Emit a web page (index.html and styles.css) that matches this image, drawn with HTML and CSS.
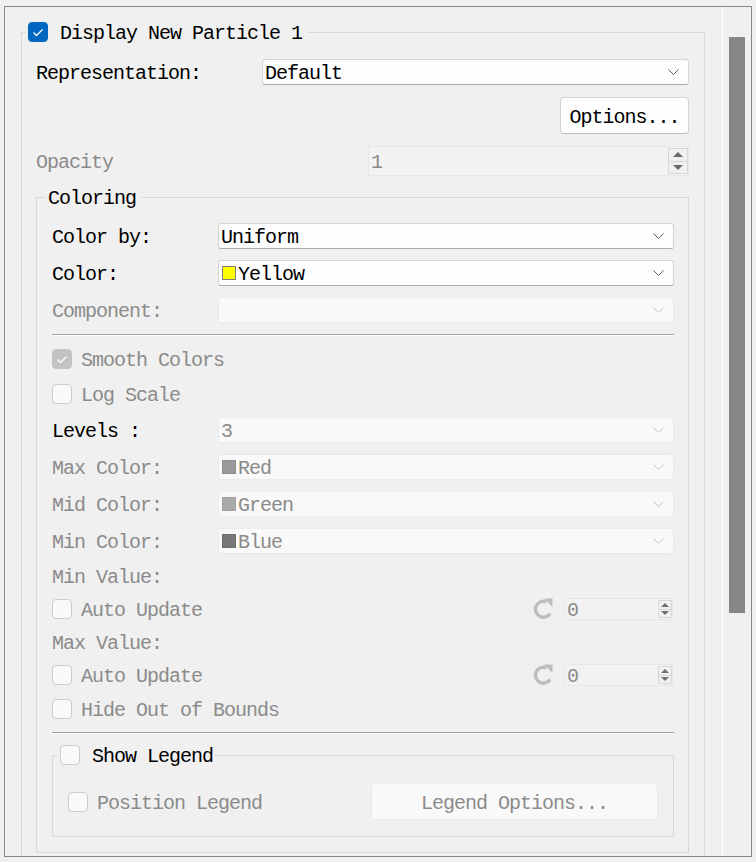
FILE: index.html
```html
<!DOCTYPE html>
<html>
<head>
<meta charset="utf-8">
<link rel="stylesheet" href="styles.css">
</head>
<body>
<div class="frame">
  <div class="viewport">
    <fieldset class="group outer">
      <legend class="legend-check">
        <span class="cb checked"><svg width="20" height="20" viewBox="0 0 20 20"><polyline points="5.5,10.5 8.5,13.5 14.5,7.5" fill="none" stroke="#fff" stroke-width="1.3"/></svg></span>
        <span class="t">Display New Particle 1</span>
      </legend>
      <div class="outer-body">
        <div class="row row-rep">
          <span class="t lbl lbl-rep">Representation:</span>
          <div class="combo"><span class="t val">Default</span><svg class="chev" width="11" height="6" viewBox="0 0 11 6"><polyline points="0.5,0.5 5.5,5.5 10.5,0.5" fill="none" stroke="#5a5a5a" stroke-width="1"/></svg></div>
        </div>
        <div class="row row-opt">
          <button class="btn btn-options"><span class="t">Options...</span></button>
        </div>
        <div class="row row-opa">
          <span class="t lbl dis">Opacity</span>
          <div class="spin spin-big">
            <span class="t val dis">1</span>
            <div class="arrows"><div class="up"></div><div class="down"></div></div>
          </div>
        </div>
        <fieldset class="group coloring">
          <legend class="legend-text"><span class="t">Coloring</span></legend>
          <div class="coloring-body">
            <div class="row row-combo">
              <span class="t lbl lbl-col">Color by:</span>
              <div class="combo"><span class="t val">Uniform</span><svg class="chev" width="11" height="6" viewBox="0 0 11 6"><polyline points="0.5,0.5 5.5,5.5 10.5,0.5" fill="none" stroke="#5a5a5a" stroke-width="1"/></svg></div>
            </div>
            <div class="row row-combo">
              <span class="t lbl lbl-col">Color:</span>
              <div class="combo"><span class="swatch sw-yellow"></span><span class="t val">Yellow</span><svg class="chev" width="11" height="6" viewBox="0 0 11 6"><polyline points="0.5,0.5 5.5,5.5 10.5,0.5" fill="none" stroke="#5a5a5a" stroke-width="1"/></svg></div>
            </div>
            <div class="row row-combo">
              <span class="t lbl lbl-col dis">Component:</span>
              <div class="combo combo-dis"><span class="val"></span><svg class="chev" width="11" height="6" viewBox="0 0 11 6"><polyline points="0.5,0.5 5.5,5.5 10.5,0.5" fill="none" stroke="#c4c4c4" stroke-width="1"/></svg></div>
            </div>
            <div class="sep"></div>
            <div class="row row-check">
              <span class="cb checked-dis"><svg width="20" height="20" viewBox="0 0 20 20"><polyline points="5.5,10.5 8.5,13.5 14.5,7.5" fill="none" stroke="#fff" stroke-width="1.3"/></svg></span>
              <span class="t dis">Smooth Colors</span>
            </div>
            <div class="row row-check">
              <span class="cb"></span>
              <span class="t dis">Log Scale</span>
            </div>
            <div class="row row-combo">
              <span class="t lbl lbl-col">Levels :</span>
              <div class="combo combo-dis"><span class="t val dis">3</span><svg class="chev" width="11" height="6" viewBox="0 0 11 6"><polyline points="0.5,0.5 5.5,5.5 10.5,0.5" fill="none" stroke="#c4c4c4" stroke-width="1"/></svg></div>
            </div>
            <div class="row row-combo">
              <span class="t lbl lbl-col dis">Max Color:</span>
              <div class="combo combo-dis"><span class="swatch sw-red"></span><span class="t val dis">Red</span><svg class="chev" width="11" height="6" viewBox="0 0 11 6"><polyline points="0.5,0.5 5.5,5.5 10.5,0.5" fill="none" stroke="#c4c4c4" stroke-width="1"/></svg></div>
            </div>
            <div class="row row-combo">
              <span class="t lbl lbl-col dis">Mid Color:</span>
              <div class="combo combo-dis"><span class="swatch sw-green"></span><span class="t val dis">Green</span><svg class="chev" width="11" height="6" viewBox="0 0 11 6"><polyline points="0.5,0.5 5.5,5.5 10.5,0.5" fill="none" stroke="#c4c4c4" stroke-width="1"/></svg></div>
            </div>
            <div class="row row-combo">
              <span class="t lbl lbl-col dis">Min Color:</span>
              <div class="combo combo-dis"><span class="swatch sw-blue"></span><span class="t val dis">Blue</span><svg class="chev" width="11" height="6" viewBox="0 0 11 6"><polyline points="0.5,0.5 5.5,5.5 10.5,0.5" fill="none" stroke="#c4c4c4" stroke-width="1"/></svg></div>
            </div>
            <div class="row row-line"><span class="t dis">Min Value:</span></div>
            <div class="row row-line">
              <span class="cb"></span>
              <span class="t dis cb-text">Auto Update</span>
              <svg class="reload" width="22" height="22" viewBox="0 0 22 22"><path d="M18.2 15.5 A8 8 0 1 1 14.5 3.8" fill="none" stroke="#bdbdbd" stroke-width="3.4"/><polygon points="12,0.5 20.5,0.5 20.5,9" fill="#bdbdbd"/></svg>
              <div class="spin spin-small">
                <span class="t val dis">0</span>
                <div class="arrows"><div class="up"></div><div class="down"></div></div>
              </div>
            </div>
            <div class="row row-line"><span class="t dis">Max Value:</span></div>
            <div class="row row-line">
              <span class="cb"></span>
              <span class="t dis cb-text">Auto Update</span>
              <svg class="reload" width="22" height="22" viewBox="0 0 22 22"><path d="M18.2 15.5 A8 8 0 1 1 14.5 3.8" fill="none" stroke="#bdbdbd" stroke-width="3.4"/><polygon points="12,0.5 20.5,0.5 20.5,9" fill="#bdbdbd"/></svg>
              <div class="spin spin-small">
                <span class="t val dis">0</span>
                <div class="arrows"><div class="up"></div><div class="down"></div></div>
              </div>
            </div>
            <div class="row row-hide">
              <span class="cb"></span>
              <span class="t dis">Hide Out of Bounds</span>
            </div>
            <div class="sep"></div>
            <fieldset class="group legend-box">
              <legend class="legend-check legend-check-small">
                <span class="cb"></span>
                <span class="t">Show Legend</span>
              </legend>
              <div class="legend-body">
                <span class="cb"></span>
                <span class="t dis">Position Legend</span>
                <button class="btn btn-legend"><span class="t">Legend Options...</span></button>
              </div>
            </fieldset>
          </div>
        </fieldset>
      </div>
    </fieldset>
  </div>
  <div class="scrollbar"><div class="thumb"></div></div>
</div>
</body>
</html>
```
FILE: styles.css
```css
* { box-sizing: border-box; }

body {
  margin: 0;
  background: #f0f0f0;
  font-family: "Liberation Mono", "DejaVu Sans Mono", monospace;
  font-size: 20px;
  letter-spacing: -1px;
  line-height: 20px;
  color: #000;
}

.t {
  display: block;
  padding-top: 4px;
  white-space: nowrap;
}

.frame {
  margin: 6px 4px 0;
  height: 851px;
  border: 1px solid #878787;
  display: flex;
  overflow: hidden;
}

.viewport {
  flex: 1;
  min-width: 0;
  overflow: hidden;
  padding: 15px 17px 0 16px;
}

.scrollbar {
  flex: none;
  width: 29px;
  border-left: 1px solid #ffffff;
  padding: 30px 0 0 6px;
}

.thumb {
  width: 16px;
  height: 576px;
  background: #868686;
}

fieldset.group {
  margin: 0;
  padding: 0;
  min-width: 0;
  border: 1px solid #d9d9d9;
}

.dis { color: #8b8b8b; }

/* legends */
.legend-check {
  margin-left: 4px;
  padding: 0 6px 0 2px;
  height: 20px;
  display: flex;
  align-items: center;
  gap: 12px;
}

.legend-check-small {
  margin-left: 5px;
  padding: 0 2px 0 2px;
}

.legend-text {
  margin-left: 9px;
  padding: 0 6px 0 2px;
  height: 22px;
  display: flex;
  align-items: center;
}

/* checkbox */
.cb {
  flex: none;
  width: 20px;
  height: 20px;
  border: 1px solid #cdcdcd;
  border-radius: 4px;
  background: #f9f9f9;
  display: block;
  position: relative;
}

.cb svg {
  position: absolute;
  left: -1px;
  top: -1px;
}

.cb.checked {
  background: #0067c0;
  border-color: #0067c0;
}

.cb.checked-dis {
  background: #c3c3c3;
  border-color: #c3c3c3;
}

/* rows */
.row {
  display: flex;
  align-items: center;
}

.outer-body {
  display: flex;
  flex-direction: column;
  padding: 17px 15px 20px 14px;
}

.row-rep { height: 26px; margin-bottom: 12px; }
.row-opt { height: 37px; margin-bottom: 12px; justify-content: flex-end; }
.row-opa { height: 30px; margin-bottom: 10px; }

.lbl { flex: none; }
.lbl-rep { width: 226px; }
.lbl-col { width: 166px; }

/* combo */
.combo {
  flex: 1;
  height: 26px;
  display: flex;
  align-items: center;
  padding: 0 9px 0 2px;
  background: #fdfdfd;
  border: 1px solid #d4d4d4;
  border-bottom-color: #acacac;
  border-radius: 3px;
  white-space: nowrap;
}

.combo .val { flex: 1; }
.combo .chev { flex: none; }

.combo-dis {
  background: #f9f9f9;
  border-color: #ebebeb;
}

.swatch {
  flex: none;
  width: 14px;
  height: 14px;
  margin: 0 2px 0 1px;
  border: 1px solid #7d7d7d;
}

.sw-yellow { background: #ffff00; border-color: #808080; }
.sw-red { background: #999999; border-color: #8f8f8f; }
.sw-green { background: #aaaaaa; border-color: #a2a2a2; }
.sw-blue { background: #777777; border-color: #707070; }

/* buttons */
.btn {
  font: inherit;
  letter-spacing: inherit;
  line-height: 20px;
  color: #000;
  height: 37px;
  padding: 0;
  background: #fdfdfd;
  border: 1px solid #d3d3d3;
  border-bottom-color: #bdbdbd;
  border-radius: 4px;
  display: flex;
  align-items: center;
  justify-content: center;
}

.btn-options {
  width: 129px;
}

.btn-legend {
  width: 287px;
  margin-left: auto;
  color: #8b8b8b;
  background: #f9f9f9;
  border-color: #ebebeb;
}

/* spin boxes */
.spin {
  display: flex;
  align-items: center;
  background: #f2f2f2;
  border: 1px solid #e7e7e7;
  padding-left: 2px;
}

.spin .val { flex: 1; }

.spin-big {
  width: 321px;
  height: 30px;
  margin-left: auto;
}

.spin-small {
  width: 109px;
  height: 22px;
  margin-right: 1px;
}

.arrows {
  flex: none;
  display: flex;
  flex-direction: column;
  border: 1px solid #d7d7d7;
  background: #f0f0f0;
}

.spin-big .arrows { width: 20px; height: 26px; }
.spin-small .arrows { width: 14px; height: 18px; }

.arrows .up,
.arrows .down {
  flex: 1;
  display: flex;
  align-items: center;
  justify-content: center;
}

.arrows .up { border-bottom: 1px solid #d7d7d7; }

.arrows .up::after,
.arrows .down::after {
  content: "";
  width: 0;
  height: 0;
  border-left: 5px solid transparent;
  border-right: 5px solid transparent;
}

.arrows .up::after { border-bottom: 5px solid #6a6a6a; }
.arrows .down::after { border-top: 5px solid #6a6a6a; }

.spin-small .arrows .up::after,
.spin-small .arrows .down::after {
  border-left-width: 4px;
  border-right-width: 4px;
}

.spin-small .arrows .up::after { border-bottom: 4px solid #707070; }
.spin-small .arrows .down::after { border-top: 4px solid #707070; }

/* coloring */
.coloring-body {
  display: flex;
  flex-direction: column;
  gap: 11px;
  padding: 15px 14px 15px 15px;
}

.row-combo { height: 26px; }
.row-check { height: 24px; gap: 9px; }
.row-line { height: 22px; }
.row-line .cb-text { margin-left: 9px; }
.row-hide { height: 24px; gap: 9px; }

.reload {
  flex: none;
  margin-left: auto;
  margin-right: 10px;
}

.sep {
  height: 2px;
  border-top: 1px solid #a0a0a0;
  border-bottom: 1px solid #ffffff;
}

.legend-body {
  display: flex;
  align-items: center;
  gap: 9px;
  padding: 18px 15px 16px 15px;
}
```
